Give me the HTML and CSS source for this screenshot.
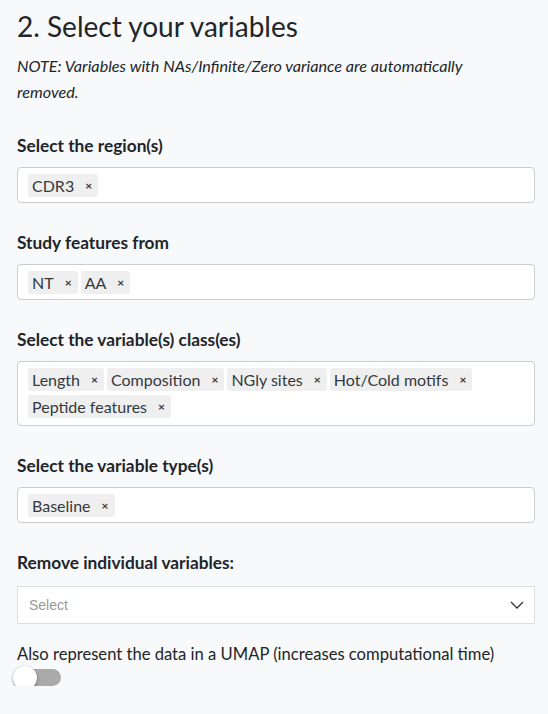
FILE: index.html
```html
<!DOCTYPE html>
<html lang="en">
  <head>
    <meta charset="UTF-8" />
    <meta name="viewport" content="width=device-width, initial-scale=1.0" />
    <title>Variables</title>
    <link rel="stylesheet" href="styles.css">
  </head>
  <body>
    <div class="panel">
      <h2 class="title">2. Select your variables</h2>
      <p class="note">
        NOTE: Variables with NAs/Infinite/Zero variance are automatically<br />
        removed.
      </p>

      <div class="field">
        <label class="field-label">Select the region(s)</label>
        <div class="multi">
          <span class="chip">CDR3<span class="remove">×</span></span>
        </div>
      </div>

      <div class="field">
        <label class="field-label">Study features from</label>
        <div class="multi">
          <span class="chip">NT<span class="remove">×</span></span>
          <span class="chip">AA<span class="remove">×</span></span>
        </div>
      </div>

      <div class="field">
        <label class="field-label">Select the variable(s) class(es)</label>
        <div class="multi multi-wide">
          <span class="chip">Length<span class="remove">×</span></span>
          <span class="chip">Composition<span class="remove">×</span></span>
          <span class="chip">NGly sites<span class="remove">×</span></span>
          <span class="chip">Hot/Cold motifs<span class="remove">×</span></span>
          <span class="chip">Peptide features<span class="remove">×</span></span>
        </div>
      </div>

      <div class="field">
        <label class="field-label">Select the variable type(s)</label>
        <div class="multi">
          <span class="chip">Baseline<span class="remove">×</span></span>
        </div>
      </div>

      <div class="field">
        <label class="field-label picker-label">Remove individual variables:</label>
        <div class="picker">
          <span class="placeholder">Select</span>
          <svg class="chevron" width="14" height="8" viewBox="0 0 14 8">
            <path d="M1 1 L7 7 L13 1" fill="none" stroke="#333" stroke-width="1.3" />
          </svg>
        </div>
      </div>

      <div class="switch-field">
        <div class="switch-label">Also represent the data in a UMAP (increases computational time)</div>
        <span class="switch"><span class="knob"></span></span>
      </div>
    </div>
  </body>
</html>
```

FILE: styles.css
```css
* {
  margin: 0;
  padding: 0;
  box-sizing: border-box;
}

body {
  background-color: #f8f9fa;
  color: #212529;
  font-family: Lato, "Open Sans", sans-serif;
  font-size: 16px;
  line-height: 24px;
}

.panel {
  padding: 8px 13px 0 17px;
}

.title {
  font-size: 28px;
  font-weight: 400;
  line-height: 36px;
}

.note {
  font-size: 16.2px;
  font-style: italic;
  line-height: 26px;
  margin-top: 9px;
  margin-bottom: 29px;
}

.field {
  margin-bottom: 28px;
}

.field-label {
  display: block;
  font-size: 17.3px;
  font-weight: 700;
  margin-bottom: 9px;
}

.picker-label {
  margin-bottom: 11px;
}

.multi {
  display: flex;
  flex-wrap: wrap;
  gap: 4px 3px;
  background: #fff;
  border: 1px solid #ccc;
  border-radius: 4px;
  padding: 6px 10px 5px;
}

.multi-wide {
  padding-bottom: 7px;
}

.chip {
  display: inline-flex;
  align-items: center;
  height: 23px;
  padding-left: 4px;
  background: #efefef;
  border-radius: 3px;
  color: #343a40;
}

.remove {
  margin-left: 5px;
  padding: 0 6px;
  font-size: 12px;
  font-weight: 700;
}

.picker {
  display: flex;
  align-items: center;
  justify-content: space-between;
  height: 38px;
  background: #fff;
  border: 1px solid #ddd;
  padding: 0 10px 0 11px;
}

.placeholder {
  font-family: "Liberation Sans", Arial, sans-serif;
  font-size: 14px;
  color: #999;
}

.switch-field {
  margin-top: -10px;
}

.switch-label {
  font-size: 16.6px;
}

.switch {
  display: block;
  position: relative;
  width: 44px;
  height: 17px;
  margin-top: 3px;
  background: #aaa;
  border-radius: 9px;
}

.knob {
  position: absolute;
  left: -4px;
  top: -3.5px;
  width: 24px;
  height: 24px;
  border-radius: 50%;
  background: #fff;
  box-shadow: 0 1px 3px rgba(0, 0, 0, 0.4);
}
```
